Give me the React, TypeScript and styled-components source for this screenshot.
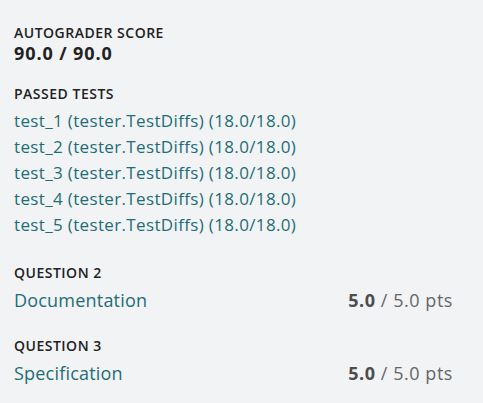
import * as React from "react";
import styled, { createGlobalStyle } from "styled-components";

const GlobalStyle = createGlobalStyle`
  html, body {
    margin: 0;
    padding: 0;
    background: #f2f3f5;
  }
  body {
    font-family: "Open Sans", "Noto Sans", sans-serif;
    color: #222;
  }
`;

const Panel = styled.div`
  padding: 24px 30px 0 14px;
  display: flex;
  flex-direction: column;
`;

const Section = styled.section<{ $gap?: number }>`
  margin-bottom: ${(p) => p.$gap ?? 0}px;
`;

const Label = styled.div`
  font-size: 14px;
  font-weight: 600;
  letter-spacing: 0.5px;
  text-transform: uppercase;
  line-height: 18px;
  color: #222;
`;

const Score = styled.div`
  font-size: 18px;
  font-weight: 700;
  letter-spacing: 0.9px;
  line-height: 22px;
  color: #222;
`;

const TestList = styled.ul`
  list-style: none;
  margin: 5px 0 0;
  padding: 0;
`;

const TestLine = styled.li`
  font-size: 17px;
  letter-spacing: 0.35px;
  line-height: 26px;
  color: #1e6d77;
`;

const QuestionRow = styled.div`
  display: flex;
  justify-content: space-between;
  align-items: baseline;
  margin-top: 6px;
  line-height: 24px;
`;

const QuestionTitle = styled.span`
  font-size: 18px;
  letter-spacing: 0.2px;
  color: #1e6d77;
`;

const Points = styled.span`
  font-size: 18px;
  letter-spacing: 0.55px;
  color: #666;

  b {
    font-weight: 700;
    color: #4d4d4d;
  }
`;

const tests = [1, 2, 3, 4, 5];

const questions = [
  { n: 2, title: "Documentation" },
  { n: 3, title: "Specification" },
];

export default function App() {
  return (
    <>
      <GlobalStyle />
      <Panel>
        <Section $gap={21}>
          <Label>Autograder Score</Label>
          <Score>90.0 / 90.0</Score>
        </Section>
        <Section $gap={26}>
          <Label>Passed Tests</Label>
          <TestList>
            {tests.map((t) => (
              <TestLine key={t}>
                test_{t} (tester.TestDiffs) (18.0/18.0)
              </TestLine>
            ))}
          </TestList>
        </Section>
        {questions.map((q) => (
          <Section key={q.n} $gap={25}>
            <Label>Question {q.n}</Label>
            <QuestionRow>
              <QuestionTitle>{q.title}</QuestionTitle>
              <Points>
                <b>5.0</b> / 5.0 pts
              </Points>
            </QuestionRow>
          </Section>
        ))}
      </Panel>
    </>
  );
}
